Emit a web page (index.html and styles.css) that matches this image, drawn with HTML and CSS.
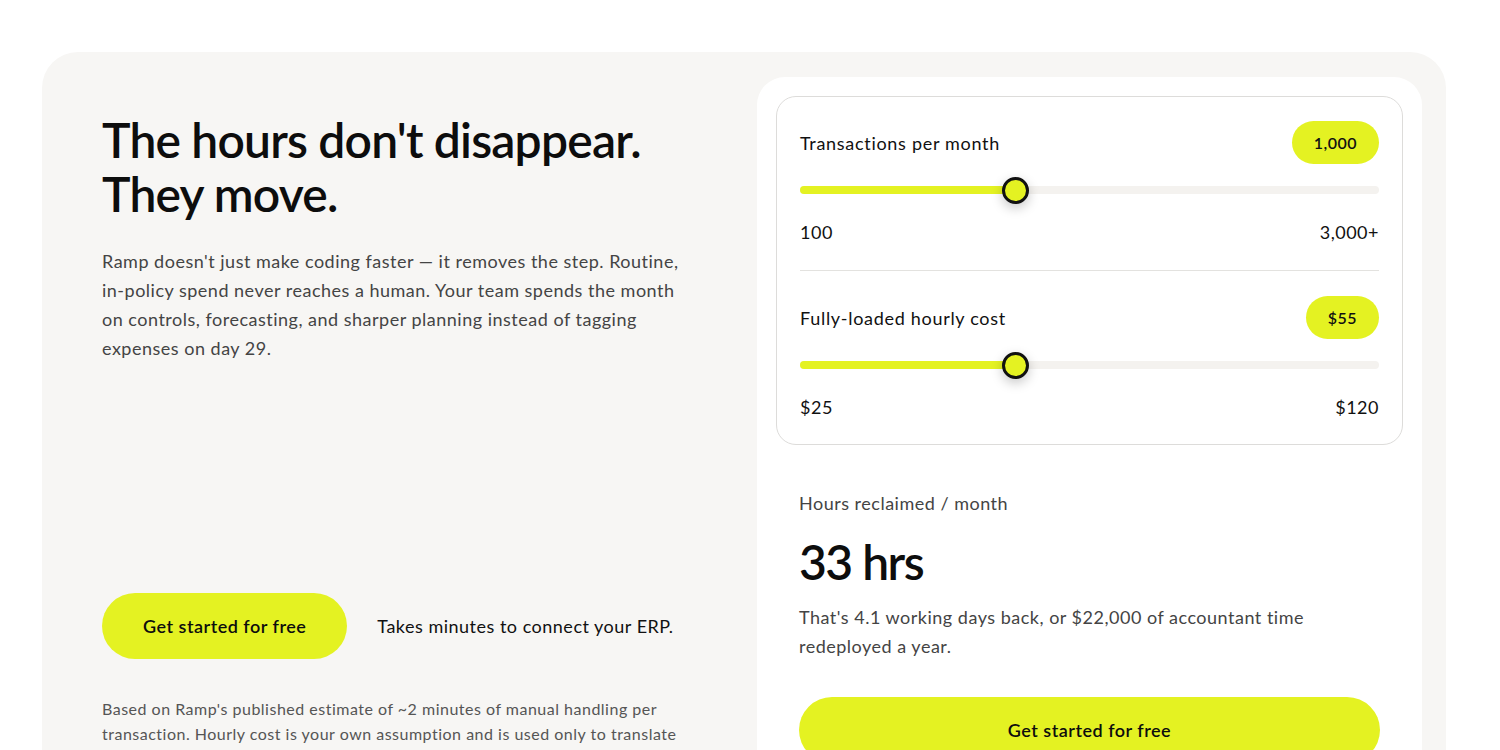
FILE: index.html
```html
<!DOCTYPE html>
<html lang="en">
<head>
<meta charset="utf-8">
<title>Hours reclaimed calculator</title>
<link rel="stylesheet" href="styles.css">
</head>
<body>
<section class="calc">
  <div class="intro">
    <h2 class="title">The hours don't disappear.<br>They move.</h2>
    <p class="lead">Ramp doesn't just make coding faster — it removes the step. Routine, in-policy spend never reaches a human. Your team spends the month on controls, forecasting, and sharper planning instead of tagging expenses on day 29.</p>
    <div class="cta-row">
      <a class="btn" href="#">Get started for free</a>
      <span class="cta-note">Takes minutes to connect your ERP.</span>
    </div>
    <p class="footnote">Based on Ramp's published estimate of ~2 minutes of manual handling per transaction. Hourly cost is your own assumption and is used only to translate hours into dollars.</p>
  </div>

  <div class="panel">
    <div class="inputs">
      <div class="field">
        <div class="field-head">
          <span class="field-label">Transactions per month</span>
          <span class="pill">1,000</span>
        </div>
        <div class="track">
          <div class="fill" style="width: 37.3%"></div>
          <div class="thumb" style="left: 37.3%"></div>
        </div>
        <div class="range">
          <span>100</span>
          <span>3,000+</span>
        </div>
      </div>
      <div class="field">
        <div class="field-head">
          <span class="field-label">Fully-loaded hourly cost</span>
          <span class="pill">$55</span>
        </div>
        <div class="track">
          <div class="fill" style="width: 37.3%"></div>
          <div class="thumb" style="left: 37.3%"></div>
        </div>
        <div class="range">
          <span>$25</span>
          <span>$120</span>
        </div>
      </div>
    </div>

    <div class="result">
      <div class="result-label">Hours reclaimed / month</div>
      <div class="result-value">33 hrs</div>
      <p class="result-text">That's 4.1 working days back, or $22,000 of accountant time redeployed a year.</p>
      <a class="btn btn-wide" href="#">Get started for free</a>
    </div>
  </div>
</section>
</body>
</html>
```

FILE: styles.css
```css
* {
  box-sizing: border-box;
}

html, body {
  margin: 0;
  background: #ffffff;
}

body {
  font-family: "Lato", "Inter", sans-serif;
  color: #111111;
  letter-spacing: 0.5px;
  -webkit-font-smoothing: antialiased;
}

.calc {
  margin: 52px 54px 0 42px;
  padding: 25px 24px 0 60px;
  background: #f7f6f4;
  border-radius: 36px 36px 0 0;
  display: grid;
  grid-template-columns: 1fr 665px;
  column-gap: 60px;
  height: 760px;
  overflow: hidden;
}

/* left column */
.intro {
  padding-top: 36px;
  display: flex;
  flex-direction: column;
}

.title {
  margin: 0;
  font-size: 48px;
  line-height: 54px;
  font-weight: 600;
  letter-spacing: -0.8px;
  color: #0d0d0d;
}

.lead {
  margin: 26px 0 0;
  font-size: 18px;
  line-height: 29px;
  color: #444444;
}

.cta-row {
  margin-top: 230px;
  display: flex;
  align-items: center;
  gap: 30px;
}

.btn {
  display: inline-flex;
  align-items: center;
  justify-content: center;
  height: 66px;
  padding: 0 41px;
  border-radius: 33px;
  background: #e4f222;
  color: #0d0d0d;
  font-size: 18px;
  font-weight: 600;
  text-decoration: none;
}

.cta-note {
  font-size: 18px;
  color: #111111;
}

.footnote {
  margin: 37px 0 0;
  font-size: 16px;
  line-height: 25px;
  color: #555555;
}

/* right column */
.panel {
  background: #ffffff;
  border-radius: 28px 28px 0 0;
  padding: 19px;
}

.inputs {
  border: 1px solid #dddcda;
  border-radius: 20px;
  padding: 0 23px;
}

.field {
  padding: 24px 0 26px;
}

.field + .field {
  padding: 25px 0 25px;
  border-top: 1px solid #e3e2df;
}

.field-head {
  display: flex;
  align-items: center;
  justify-content: space-between;
}

.field-label {
  font-size: 18px;
  letter-spacing: 0.7px;
  color: #111111;
}

.pill {
  display: inline-flex;
  align-items: center;
  height: 43px;
  padding: 0 22px;
  border-radius: 22px;
  background: #e4f222;
  font-size: 16px;
  font-weight: 600;
  color: #111111;
}

.track {
  position: relative;
  margin-top: 22px;
  height: 8px;
  border-radius: 4px;
  background: #f4f2ef;
}

.fill {
  height: 100%;
  border-radius: 4px;
  background: #e4f222;
}

.thumb {
  position: absolute;
  top: 50%;
  width: 27px;
  height: 27px;
  margin: -13.5px 0 0 -13.5px;
  border-radius: 50%;
  border: 3px solid #111111;
  background: #e4f222;
  box-shadow: 0 4px 12px rgba(0, 0, 0, 0.22);
}

.range {
  margin-top: 26px;
  display: flex;
  justify-content: space-between;
  font-size: 18px;
  line-height: 24px;
  color: #111111;
}

.result {
  padding: 46px 23px 0;
}

.result-label {
  font-size: 18px;
  line-height: 24px;
  color: #444444;
}

.result-value {
  margin-top: 20px;
  font-size: 48px;
  line-height: 53px;
  font-weight: 600;
  letter-spacing: -1.5px;
  color: #0d0d0d;
}

.result-text {
  margin: 15px 0 0;
  font-size: 18px;
  line-height: 29px;
  color: #444444;
}

.btn-wide {
  display: flex;
  width: 100%;
  margin-top: 36px;
}
```
